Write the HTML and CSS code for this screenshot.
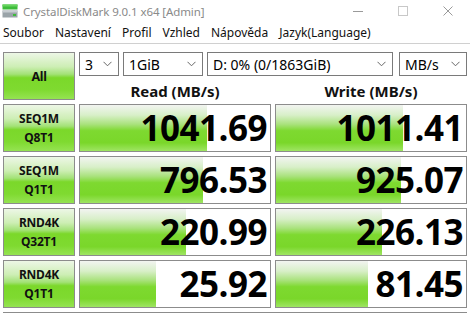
FILE: index.html
```html
<!DOCTYPE html>
<html>
<head>
<meta charset="utf-8">
<link rel="stylesheet" href="styles.css">
</head>
<body>
<div class="window">
  <div class="titlebar">
    <svg class="appicon" width="16" height="14" viewBox="0 0 16 14">
      <rect x="0.5" y="0.5" width="15" height="5" fill="#3dbb3a"/>
      <rect x="0.5" y="0.5" width="15" height="2" fill="#66d45e"/>
      <rect x="0.5" y="6.5" width="15" height="7" fill="#9aa3a8"/>
      <rect x="0.5" y="6.5" width="15" height="2" fill="#c6ccd0"/>
      <rect x="11" y="10" width="3" height="2" fill="#3dbb3a"/>
    </svg>
    <span class="title">CrystalDiskMark 9.0.1 x64 [Admin]</span>
    <div class="controls">
      <span class="ctl"><svg width="10" height="10" viewBox="0 0 10 10"><line x1="0" y1="5.5" x2="10" y2="5.5" stroke="#9a9a9a" stroke-width="1"/></svg></span>
      <span class="ctl"><svg width="10" height="10" viewBox="0 0 10 10"><rect x="0.5" y="0.5" width="9" height="9" fill="none" stroke="#c8c8c8" stroke-width="1"/></svg></span>
      <span class="ctl"><svg width="10" height="10" viewBox="0 0 10 10"><path d="M0.5 0.5 L9.5 9.5 M9.5 0.5 L0.5 9.5" stroke="#9a9a9a" stroke-width="1"/></svg></span>
    </div>
  </div>
  <div class="menubar">
    <span class="mi">Soubor</span>
    <span class="mi">Nastavení</span>
    <span class="mi">Profil</span>
    <span class="mi">Vzhled</span>
    <span class="mi">Nápověda</span>
    <span class="mi">Jazyk(Language)</span>
  </div>
  <div class="main">
    <div class="btn all">All</div>
    <div class="header">
      <div class="combos">
        <div class="combo c1"><span>3</span><svg class="chev" width="9" height="6" viewBox="0 0 9 6"><polyline points="0.5,0.8 4.5,4.8 8.5,0.8" fill="none" stroke="#666" stroke-width="1"/></svg></div>
        <div class="combo c2"><span>1GiB</span><svg class="chev" width="9" height="6" viewBox="0 0 9 6"><polyline points="0.5,0.8 4.5,4.8 8.5,0.8" fill="none" stroke="#666" stroke-width="1"/></svg></div>
        <div class="combo c3"><span>D: 0% (0/1863GiB)</span><svg class="chev" width="9" height="6" viewBox="0 0 9 6"><polyline points="0.5,0.8 4.5,4.8 8.5,0.8" fill="none" stroke="#666" stroke-width="1"/></svg></div>
        <div class="combo c4"><span>MB/s</span><svg class="chev" width="9" height="6" viewBox="0 0 9 6"><polyline points="0.5,0.8 4.5,4.8 8.5,0.8" fill="none" stroke="#666" stroke-width="1"/></svg></div>
      </div>
      <div class="heads">
        <div class="head">Read (MB/s)</div>
        <div class="head">Write (MB/s)</div>
      </div>
    </div>

    <div class="btn label">SEQ1M<br>Q8T1</div>
    <div class="val"><div class="bar" style="width:127px"></div><span class="num">1041.69</span></div>
    <div class="val"><div class="bar" style="width:127px"></div><span class="num">1011.41</span></div>

    <div class="btn label">SEQ1M<br>Q1T1</div>
    <div class="val"><div class="bar" style="width:123px"></div><span class="num">796.53</span></div>
    <div class="val"><div class="bar" style="width:125px"></div><span class="num">925.07</span></div>

    <div class="btn label">RND4K<br>Q32T1</div>
    <div class="val"><div class="bar" style="width:106px"></div><span class="num">220.99</span></div>
    <div class="val"><div class="bar" style="width:106px"></div><span class="num">226.13</span></div>

    <div class="btn label">RND4K<br>Q1T1</div>
    <div class="val"><div class="bar" style="width:76px"></div><span class="num">25.92</span></div>
    <div class="val"><div class="bar" style="width:92px"></div><span class="num">81.45</span></div>

    <div class="comment"></div>
  </div>
</div>
</body>
</html>
```
FILE: styles.css
```css
html, body {
  margin: 0;
  padding: 0;
  background: #ffffff;
}
body {
  width: 470px;
  height: 313px;
  overflow: hidden;
  font-family: "Noto Sans", "Open Sans", sans-serif;
}
.window {
  width: 470px;
  height: 313px;
  overflow: hidden;
  background: #ffffff;
}
.titlebar {
  height: 22px;
  display: flex;
  align-items: center;
}
.appicon {
  margin-left: 2px;
  margin-right: 5px;
  flex: none;
}
.title {
  font-size: 11.5px;
  color: #8a8a8a;
  letter-spacing: -0.1px;
}
.controls {
  margin-left: auto;
  display: flex;
}
.ctl {
  width: 45px;
  height: 22px;
  display: flex;
  align-items: center;
  justify-content: center;
}
.menubar {
  height: 21px;
  border-bottom: 1px solid #d0d0d0;
  display: flex;
  align-items: center;
  padding-left: 3px;
  gap: 11px;
  font-size: 12px;
  color: #111;
}
.main {
  padding: 8px 0 0 3px;
  display: grid;
  grid-template-columns: 72px 192px 192px;
  grid-template-rows: repeat(5, 48px) 1px;
  column-gap: 4px;
  row-gap: 4px;
}
.btn {
  box-sizing: border-box;
  border: 1px solid #8c8c8c;
  background: linear-gradient(to bottom, #edf7e6 0%, #cdeeb4 30%, #a3e277 46%, #7bd82a 54%, #7fda30 80%, #95e352 100%);
  display: flex;
  align-items: center;
  justify-content: center;
  text-align: center;
  font-weight: 700;
  color: #111;
}
.all {
  font-size: 12.5px;
  letter-spacing: -0.3px;
}
.label {
  font-size: 12px;
  line-height: 19px;
  letter-spacing: -0.2px;
}
.header {
  grid-column: 2 / 4;
  display: flex;
  flex-direction: column;
}
.combos {
  display: flex;
  height: 24px;
}
.combo {
  box-sizing: border-box;
  height: 24px;
  border: 1px solid #7a7a7a;
  background: #fff;
  display: flex;
  align-items: center;
  padding-left: 5px;
  padding-right: 6px;
  font-size: 14px;
  color: #000;
}
.combo span {
  flex: 1;
  white-space: nowrap;
}
.chev { flex: none; }
.c1 { width: 40px; }
.c2 { width: 80px; margin-left: 4px; }
.c3 { width: 186px; margin-left: 4px; }
.c4 { width: 68px; margin-left: 6px; }
.heads {
  display: flex;
  gap: 4px;
  flex: 1;
  align-items: flex-end;
}
.head {
  width: 192px;
  text-align: center;
  font-weight: 700;
  font-size: 15px;
  line-height: 20px;
  margin-bottom: -1px;
  color: #111;
}
.val {
  position: relative;
  box-sizing: border-box;
  border: 1px solid #8c8c8c;
  background: #fff;
  display: flex;
  align-items: center;
  justify-content: flex-end;
  overflow: hidden;
}
.bar {
  position: absolute;
  left: 0;
  top: 0;
  bottom: 0;
  background: linear-gradient(to bottom, #f2f4f1 0%, #d8efc8 22%, #a9e27c 42%, #7ed930 56%, #7ad72a 82%, #9fe563 100%);
}
.num {
  position: relative;
  font-family: "Open Sans", "Noto Sans", sans-serif;
  font-weight: 700;
  font-size: 35px;
  line-height: 40px;
  letter-spacing: -0.5px;
  padding-right: 3px;
  color: #000;
}
.comment {
  grid-column: 1 / 4;
  border-top: 1px solid #8c8c8c;
}
```
